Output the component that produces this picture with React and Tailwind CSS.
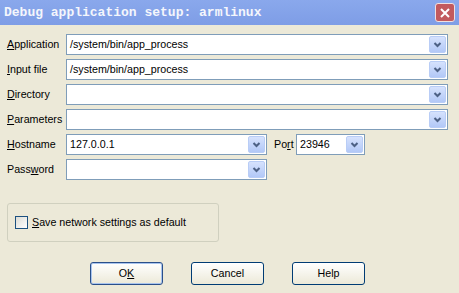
import React from "react";

const font = { fontFamily: '"Liberation Sans", Arial, sans-serif' };

function Chevron() {
  return (
    <svg width="9" height="6" viewBox="0 0 9 6">
      <path d="M1.5 1 L4.5 4 L7.5 1" fill="none" stroke="#4d6185" strokeWidth="2" />
    </svg>
  );
}

function Combo({ value = "", className = "" }) {
  return (
    <div className={`h-[21px] border border-[#7f9db9] bg-white flex items-center ${className}`}>
      <div className="flex-1 pl-[3px] text-[10.7px] text-black leading-none truncate">{value}</div>
      <div className="w-[17px] h-[17px] mr-[1px] rounded-[2px] border border-[#b9cdf6] bg-gradient-to-b from-[#d6e2fd] to-[#b2c8f7] flex items-center justify-center">
        <Chevron />
      </div>
    </div>
  );
}

function Label({ pre, u, post }) {
  return (
    <span>
      {pre}
      <span className="underline underline-offset-[1px]">{u}</span>
      {post}
    </span>
  );
}

function Row({ label, children }) {
  return (
    <div className="flex items-center h-[21px]">
      <div className="w-[59px] text-[10.7px] text-black leading-none">{label}</div>
      {children}
    </div>
  );
}

function Button({ children, def }) {
  return (
    <div
      className={`w-[73px] h-[23px] rounded-[3px] border ${def ? "border-[#2a4f8a]" : "border-[#003c74]"} bg-gradient-to-b from-white to-[#ece9d8] flex items-center justify-center text-[10.7px] text-black ${def ? "shadow-[inset_0_0_0_1px_#a8c4ee]" : ""}`}
    >
      {children}
    </div>
  );
}

export default function App() {
  return (
    <div className="w-[459px] h-[293px] bg-[#ece9d8] flex flex-col overflow-hidden" style={font}>
      <div className="h-[25px] bg-gradient-to-b from-[#8aa8ec] to-[#7e9de6] flex items-center pl-[4px] pr-[4px]">
        <div
          className="flex-1 text-[#f4f6fc] text-[13px] font-bold leading-none"
          style={{ fontFamily: '"Liberation Mono", "Courier New", monospace' }}
        >
          Debug application setup: armlinux
        </div>
        <div className="w-[20px] h-[19px] rounded-[3px] border border-[#f0e0e0] bg-[#c25a5e] flex items-center justify-center">
          <svg width="12" height="12" viewBox="0 0 12 12">
            <path d="M2 2 L10 10 M10 2 L2 10" stroke="white" strokeWidth="2" />
          </svg>
        </div>
      </div>

      <div className="flex flex-col gap-[4px] pl-[7px] pt-[9px]">
        <Row label={<Label u="A" post="pplication" />}>
          <Combo value="/system/bin/app_process" className="w-[382px]" />
        </Row>
        <Row label={<Label u="I" post="nput file" />}>
          <Combo value="/system/bin/app_process" className="w-[382px]" />
        </Row>
        <Row label={<Label u="D" post="irectory" />}>
          <Combo className="w-[382px]" />
        </Row>
        <Row label={<Label u="P" post="arameters" />}>
          <Combo className="w-[382px]" />
        </Row>
        <Row label={<Label u="H" post="ostname" />}>
          <Combo value="127.0.0.1" className="w-[201px]" />
          <div className="ml-[7px] w-[22px] text-[10.7px] text-black leading-none">
            <Label pre="Po" u="r" post="t" />
          </div>
          <Combo value="23946" className="w-[69px]" />
        </Row>
        <Row label={<Label pre="Pass" u="w" post="ord" />}>
          <Combo className="w-[201px]" />
        </Row>
      </div>

      <div className="ml-[7px] mt-[23px] w-[212px] h-[39px] border border-[#d0d0bf] rounded-[3px] flex items-center pl-[7px]">
        <div className="w-[13px] h-[13px] border border-[#1c5180] bg-gradient-to-br from-[#dcdcd5] to-white" />
        <div className="ml-[4px] text-[10.7px] text-black leading-none">
          <Label u="S" post="ave network settings as default" />
        </div>
      </div>

      <div className="flex gap-[28px] ml-[90px] mt-[20px]">
        <Button def>
          <Label pre="O" u="K" />
        </Button>
        <Button>Cancel</Button>
        <Button>Help</Button>
      </div>
    </div>
  );
}
